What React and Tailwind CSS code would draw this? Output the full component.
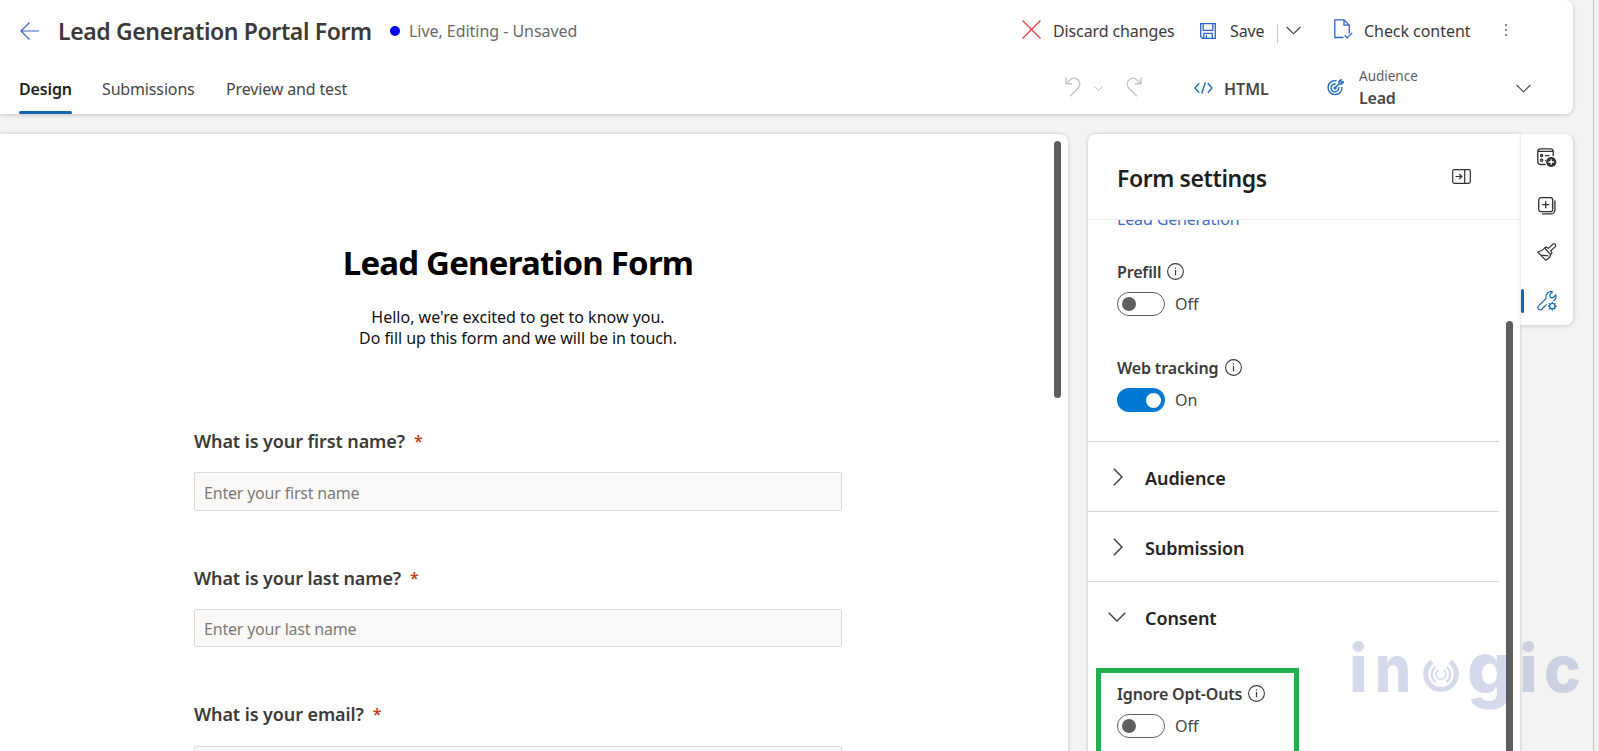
import React, { useState } from 'react';

const ChevronDown = ({ className }) => (
  <svg viewBox="0 0 18 10" fill="none" stroke="currentColor" className={className}>
    <path d="M0.7 0.8L9 9l8.3-8.2" strokeWidth="1.3" />
  </svg>
);

const ChevronRight = ({ className }) => (
  <svg viewBox="0 0 10 18" fill="none" stroke="currentColor" className={className}>
    <path d="M0.8 0.7L9 9l-8.2 8.3" strokeWidth="1.4" />
  </svg>
);

const InfoIcon = () => (
  <svg viewBox="0 0 17 17" fill="none" stroke="#3b3a39" className="w-[17px] h-[17px]">
    <circle cx="8.5" cy="8.5" r="7.9" strokeWidth="1.1" />
    <path d="M8.5 7v5.2M8.5 4.4v1.3" strokeWidth="1.2" />
  </svg>
);

const Undo = ({ className }) => (
  <svg viewBox="0 0 16 20" fill="none" stroke="#c8c6c4" strokeWidth="1.5" className={className}>
    <path d="M1 0.5V6.8H7" />
    <path d="M1.2 6.6L4.6 3.2C7.6 0.4 11 1 13 3c2.4 2.6 2.2 6 0 8.2L5 19.3" />
  </svg>
);

const Toggle = ({ checked, onChange }) => (
  <button type="button" onClick={onChange} className="flex items-center">
    <span
      className={
        checked
          ? 'flex items-center justify-end w-12 h-6 rounded-full bg-[#0078d4] pr-1'
          : 'flex items-center w-12 h-6 rounded-full border border-[#605e5c] bg-white pl-1'
      }
    >
      <span className={checked ? 'w-[15px] h-[15px] rounded-full bg-white' : 'w-3.5 h-3.5 rounded-full bg-[#605e5c]'} />
    </span>
    <span className="ml-2.5 text-[16px] leading-6 text-[#484644]">{checked ? 'On' : 'Off'}</span>
  </button>
);

const Setting = ({ label, labelClass, value }) => {
  const [checked, setChecked] = useState(value);

  return (
    <div>
      <div className="flex items-center h-[22px]">
        <span
          className={`${labelClass} shrink-0 whitespace-nowrap pt-px text-[16px] tracking-[-0.15px] font-semibold text-[#3b3a39] leading-[22px]`}
        >
          {label}
        </span>
        <InfoIcon />
      </div>
      <div className="mt-2.5">
        <Toggle checked={checked} onChange={() => setChecked(!checked)} />
      </div>
    </div>
  );
};

const Section = ({ title, open }) => (
  <div className="flex items-center h-[70px] w-[411px] border-t border-[#d6d6d6] text-[#3b3a39]">
    <div className="flex w-[57px] shrink-0">
      {open ? <ChevronDown className="ml-5 w-[18px] h-2.5" /> : <ChevronRight className="ml-[25px] w-2.5 h-[18px]" />}
    </div>
    <span className="pt-1 text-[18px] tracking-[-0.1px] font-semibold text-[#252423]">{title}</span>
  </div>
);

const Field = ({ label, placeholder, inputClass }) => (
  <div>
    <label className="flex h-6 items-center whitespace-nowrap text-[18px] tracking-[-0.1px] font-semibold text-[#3b3a39]">
      {label}
      <span className="ml-[9px] text-[16px] font-semibold text-[#c4421a]">*</span>
    </label>
    <input
      type="text"
      placeholder={placeholder}
      className={`${inputClass} block w-[648px] rounded-xs border border-[#dcdbd9] bg-[#faf9f8] px-[9px] pt-0.5 text-[16px] tracking-[-0.2px] placeholder:text-[#7d7b79] outline-none`}
    />
  </div>
);

const Header = () => (
  <header className="w-[1573px] h-[114px] rounded-r-lg bg-white shadow-[0_1px_4px_rgba(0,0,0,0.2)]">
    <div className="flex items-center h-[62px] pl-5 text-[#3b3a39]">
      <svg viewBox="0 0 19 18" fill="none" stroke="#3b63d0" strokeWidth="1.2" className="-mt-px w-[19px] h-[18px]">
        <path d="M9.5 0.5L1 9l8.5 8.5M1 9h18" />
      </svg>
      <h1 className="ml-[19px] w-[332px] shrink-0 whitespace-nowrap text-[23px] tracking-[-0.38px] font-semibold">
        Lead Generation Portal Form
      </h1>
      <span className="w-2.5 h-2.5 rounded-full bg-[#0000f5]" />
      <span className="ml-[9px] w-[613px] text-[16px] tracking-[-0.04px] text-[#6b6967]">Live, Editing - Unsaved</span>

      <svg viewBox="0 0 19 19" fill="none" stroke="#e8343a" strokeWidth="1.1" className="-mt-1 w-[19px] h-[19px]">
        <path d="M0.5 0.5l18 18M18.5 0.5l-18 18" />
      </svg>
      <span className="ml-3 w-[147px] whitespace-nowrap text-[16px] tracking-[-0.12px]">Discard changes</span>
      <svg viewBox="0 0 16 16" fill="none" stroke="#2f62cf" strokeWidth="1.3" className="w-4 h-4">
        <path d="M0.7 0.7h14.6v14.6H2.5L0.7 13.5zM3.2 0.7v6.6h9.6V0.7M3.8 15.3v-5h8.4v5M6.4 12v3.3" />
      </svg>
      <span className="ml-3.5 w-[47px] text-[16px] tracking-[-0.1px]">Save</span>
      <span className="w-px h-[19px] bg-[#c8c6c4] mt-1" />
      <ChevronDown className="ml-2 -mt-0.5 w-[15px] h-[9px]" />
      <svg viewBox="0 0 19 20" fill="none" stroke="#2f62cf" strokeWidth="1.3" className="-mt-1 ml-[33px] w-[19px] h-5">
        <path d="M9.5 18.5H0.8V0.8H10l5.3 5.4v8.3M10 0.8v5.4h5.3" />
        <path d="M10.6 16.3l2.6 2.6 5-5" />
      </svg>
      <span className="ml-[11px] w-[141px] whitespace-nowrap text-[16px] tracking-[-0.05px]">Check content</span>
      <span className="-mt-0.5 flex flex-col gap-[3px]">
        <span className="w-0.5 h-0.5 bg-[#8a8886]" />
        <span className="w-0.5 h-0.5 bg-[#8a8886]" />
        <span className="w-0.5 h-0.5 bg-[#8a8886]" />
      </span>
    </div>

    <div className="flex items-center h-[52px] pl-5 text-[16px] text-[#484644]">
      <nav className="flex h-full w-[1045px] tracking-[-0.15px]">
        <div className="-ml-px flex flex-col w-[53px] h-full whitespace-nowrap font-semibold text-[#201f1e]">
          <span className="flex items-center h-[49px] pt-[5px]">Design</span>
          <span className="h-[3px] rounded-full bg-[#1267b4]" />
        </div>
        <span className="flex items-center ml-[30px] w-[124px] pt-0.5">Submissions</span>
        <span className="flex items-center pt-0.5">Preview and test</span>
      </nav>
      <Undo className="-mt-0.5 w-4 h-5" />
      <ChevronDown className="ml-[13px] w-[9px] h-[5px] text-[#a5a3a1]" />
      <Undo className="-mt-0.5 ml-[23px] w-4 h-5 -scale-x-100" />
      <svg viewBox="0 0 19 12" fill="none" stroke="#1f6cbf" strokeWidth="1.4" className="ml-[52px] w-[19px] h-3">
        <path d="M5.2 1.2L1 6l4.2 4.8M13.8 1.2L18 6l-4.2 4.8M11.3 0.5L7.7 11.5" />
      </svg>
      <span className="ml-[11px] w-[102px] pt-0.5 font-semibold">HTML</span>
      <svg viewBox="0 0 17 17" fill="none" stroke="#1f6cbf" strokeWidth="1.4" className="-mt-0.5 ml-px w-[17px] h-[17px]">
        <path d="M9.6 1.8A7 7 0 1 0 15 7.8" />
        <path d="M8.6 5.1A3.9 3.9 0 1 0 11.7 8.2" />
        <circle cx="8" cy="9" r="0.9" />
        <path d="M8.2 8.8L12 5M12 5V2.4L14 0.7V3h2.4L14.6 5z" />
      </svg>
      <div className="ml-[15px] w-[157px] pt-[3px]">
        <div className="text-[13.5px] leading-[18px] text-[#605e5c]">Audience</div>
        <div className="font-semibold tracking-[-0.2px] leading-[27px]">Lead</div>
      </div>
      <ChevronDown className="w-[15px] h-[9px]" />
    </div>
  </header>
);

const Preview = () => (
  <main className="flex justify-between w-[1068px] h-[640px] overflow-hidden rounded-tr-lg bg-white shadow-[0_0_4px_rgba(0,0,0,0.2)]">
    <div className="ml-[194px] w-[648px]">
      <h2 className="mt-[103px] text-center text-[33px] tracking-[-0.8px] leading-[52px] font-bold text-black">
        Lead Generation Form
      </h2>
      <p className="mt-[18px] text-center text-[16px] leading-[21px] text-[#111]">
        Hello, we&apos;re excited to get to know you.
        <br />
        <span className="tracking-[-0.05px]">Do fill up this form and we will be in touch.</span>
      </p>
      <div className="mt-20 flex flex-col gap-[55px]">
        <Field label="What is your first name?" placeholder="Enter your first name" inputClass="mt-[19px] h-[39px]" />
        <Field label="What is your last name?" placeholder="Enter your last name" inputClass="mt-[19px] h-[38px]" />
        <Field label="What is your email?" placeholder="Enter your email" inputClass="mt-5 h-[39px]" />
      </div>
    </div>
    <div className="mt-[7px] mr-[7px] w-[7px] h-[257px] rounded-full bg-[#605e5c]" />
  </main>
);

const FormSettings = () => (
  <section className="flex flex-col w-[432px] h-[640px] rounded-tl-lg bg-white shadow-[0_0_4px_rgba(0,0,0,0.2)]">
    <div className="flex shrink-0 items-center justify-between h-[86px] pl-[29px] pr-[49px] border-b border-[#f0f0f0]">
      <h2 className="pt-1 text-[23px] tracking-[-0.4px] font-semibold text-[#201f1e]">Form settings</h2>
      <svg viewBox="0 0 19 15" fill="none" stroke="#323130" strokeWidth="1.2" className="w-[19px] h-[15px]">
        <rect x="0.7" y="0.7" width="17.6" height="13.6" rx="1.5" />
        <path d="M12.7 0.7v13.6M3.5 7.5h6.3M7.3 5l2.5 2.5L7.3 10" />
      </svg>
    </div>
    <div className="flex justify-between h-[554px]">
      <div className="w-[411px] overflow-hidden">
        {/* scrolled partly under the panel title */}
        <div className="h-[41px] pl-[29px] overflow-hidden">
          <a className="-mt-[13px] block text-[16px] tracking-[-0.15px] leading-6 text-[#3f6bcf]">Lead Generation</a>
        </div>
        <div className="pl-[29px] -mt-px">
          <Setting label="Prefill" labelClass="w-[50px]" value={false} />
        </div>
        <div className="pl-[29px] mt-10 h-[85px]">
          <Setting label="Web tracking" labelClass="w-[108px]" value={true} />
        </div>
        <Section title="Audience" />
        <Section title="Submission" />
        <Section title="Consent" open />
        <div className="ml-2 mt-[17px] w-[203px] h-[120px] border-[5px] border-[#22b14c] pt-[9px] pl-4">
          <Setting label="Ignore Opt-Outs" labelClass="w-[131px]" value={false} />
        </div>
      </div>
      <div className="mt-[101px] mr-[7px] w-[7px] rounded-t-full bg-[#605e5c]" />
    </div>
  </section>
);

const ToolRail = () => (
  <aside className="flex w-[53px] h-[191px] rounded-r-lg border-l border-[#f0f0f0] bg-white shadow-[1px_1px_4px_rgba(0,0,0,0.15)]">
    <span className="mt-[155px] w-[3px] h-6 rounded-full bg-[#1267b4]" />
    <div className="flex flex-col items-center ml-[13px] pt-3.5 w-5">
      <svg viewBox="0 0 20 20" fill="none" stroke="#323130" strokeWidth="1.3" className="w-5 h-5">
        <path d="M8.5 16.5H3.4A2.6 2.6 0 0 1 0.8 13.9V3.4A2.6 2.6 0 0 1 3.4 0.8h10.2a2.6 2.6 0 0 1 2.6 2.6V8M1.5 3.3h14" />
        <circle cx="4.6" cy="7.6" r="1.1" />
        <circle cx="4.6" cy="12.3" r="1.1" />
        <path d="M8 7.6h4.5M8 12.3h1" />
        <circle cx="14.2" cy="14" r="5.1" fill="#323130" stroke="none" />
        <path d="M14.2 11.2v5.6M11.4 14H17" stroke="#fff" />
      </svg>
      <svg viewBox="0 0 18 18" fill="none" stroke="#323130" strokeWidth="1.3" className="mt-[29px] w-[18px] h-[18px]">
        <rect x="0.7" y="0.7" width="14" height="14" rx="2.2" />
        <path d="M7.7 4.2v7M4.2 7.7h7M16.9 3.5v9.4a4 4 0 0 1-4 4H4" />
      </svg>
      <svg viewBox="0 0 20 18" fill="none" stroke="#323130" strokeWidth="1.2" strokeLinejoin="round" className="mt-7 w-5 h-[18px]">
        <path d="M7.6 5L9.4 3.9l2 1.5 4.4-4.2a1.7 1.7 0 0 1 2.5 0.2a1.7 1.7 0 0 1-0.1 2.2l-4.4 4.2 1.1 2-1.3 1.8z" />
        <path d="M7.6 5C5.7 7.5 3.4 8.6 0.8 9l7.8 8.1c3.2-1.2 4.6-3 5-5.5M3.8 12.2l7.6 0.6" />
      </svg>
      <svg viewBox="0 0 20 20" fill="none" stroke="#1267b4" strokeWidth="1.2" strokeLinejoin="round" className="mt-[30px] w-5 h-5">
        <path d="M9.6 13.4L5 18.2a2.3 2.3 0 0 1-3.4 0a2.3 2.3 0 0 1 0-3.3L9 7.6C8.5 5.3 9.2 3 11 1.7c1.4-1 3-1.2 4.5-0.8L12.8 3.7l0.5 2.6 2.6 0.5 2.9-2.8c0.5 1.6 0.2 3.2-0.8 4.4c-0.6 0.7-1.2 1.1-2 1.4" />
        <circle cx="15.3" cy="15.2" r="2.7" />
        <path d="M15.3 10.8v1.7M15.3 17.9v1.7M10.9 15.2h1.7M18 15.2h1.7M12.2 12.1l1.2 1.2M17.2 17.1l1.2 1.2M18.4 12.1l-1.2 1.2M13.4 17.1l-1.2 1.2" />
      </svg>
    </div>
  </aside>
);

// Brand mark laid over the bottom right corner of the page
const Watermark = () => (
  <svg viewBox="0 0 240 110" className="absolute left-[1345px] top-[621px] w-[240px] h-[110px] overflow-visible pointer-events-none opacity-20">
    <g fill="#2f4ba0" className="font-['Inter',sans-serif] text-[66px] font-extrabold">
      <text x="4" y="71">i</text>
      <text x="30" y="71" textLength="36" lengthAdjust="spacingAndGlyphs">n</text>
      <text x="122" y="73" className="text-[72px]">g</text>
      <text x="174" y="71">i</text>
      <text x="199" y="71" textLength="37" lengthAdjust="spacingAndGlyphs">c</text>
    </g>
    <g fill="none" stroke="#2f4ba0">
      <path d="M87 40.8A15.300 15.300 0 1 0 105 40.8" strokeWidth="5" />
      <path d="M90.5 46A9.5 9.5 0 0 0 90.5 61M101.5 46A9.5 9.5 0 0 1 101.5 61" strokeWidth="2.2" />
      <path d="M93.5 49A5 5 0 1 0 98.5 49" strokeWidth="1.5" />
    </g>
  </svg>
);

const App = () => {
  return (
    <div className="relative flex w-full h-[751px] overflow-hidden bg-[#f3f3f3] font-['Noto_Sans','Open_Sans',sans-serif]">
      <div className="flex flex-col w-[1593px] shrink-0">
        <Header />
        <div className="flex mt-5">
          <Preview />
          <div className="w-5 shrink-0" />
          <FormSettings />
          <ToolRail />
        </div>
      </div>
      <div className="w-1.5 shrink-0 border-l border-[#c8c8c8] bg-[#f0f0f0]" />
      <Watermark />
    </div>
  );
};

export default App;
